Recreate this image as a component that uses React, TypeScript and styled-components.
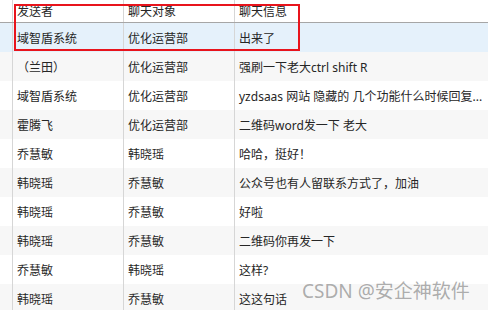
import * as React from 'react';
import styled, { createGlobalStyle } from 'styled-components';

const GlobalStyle = createGlobalStyle`
  html, body {
    margin: 0;
    padding: 0;
    background: #fff;
    overflow: hidden;
  }
  body {
    font-family: "Noto Sans", "Noto Sans CJK SC", sans-serif;
  }
`;

type Msg = { from: string; to: string; text: string };

const messages: Msg[] = [
  { from: '域智盾系统', to: '优化运营部', text: '出来了' },
  { from: '（兰田）', to: '优化运营部', text: '强刷一下老大ctrl shift R' },
  { from: '域智盾系统', to: '优化运营部', text: 'yzdsaas 网站 隐藏的 几个功能什么时候回复...' },
  { from: '霍腾飞', to: '优化运营部', text: '二维码word发一下 老大' },
  { from: '乔慧敏', to: '韩晓瑶', text: '哈哈，挺好！' },
  { from: '韩晓瑶', to: '乔慧敏', text: '公众号也有人留联系方式了，加油' },
  { from: '韩晓瑶', to: '乔慧敏', text: '好啦' },
  { from: '韩晓瑶', to: '乔慧敏', text: '二维码你再发一下' },
  { from: '乔慧敏', to: '韩晓瑶', text: '这样?' },
  { from: '韩晓瑶', to: '乔慧敏', text: '这这句话' },
];

export default function App() {
  return (
    <>
      <GlobalStyle />
      <Grid>
        <HeadRow>
          <Cell />
          <Cell $line>发送者</Cell>
          <Cell $line>聊天对象</Cell>
          <Cell $line>聊天信息</Cell>
        </HeadRow>
        {messages.map((m, i) => (
          <Row key={i} $tone={i === 0 ? 'selected' : i % 2 === 1 ? 'alt' : 'plain'}>
            <Cell />
            <Cell $line>{m.from}</Cell>
            <Cell $line>{m.to}</Cell>
            <Cell $line>{m.text}</Cell>
          </Row>
        ))}
        <Highlight />
        <Watermark>CSDN @安企神软件</Watermark>
      </Grid>
    </>
  );
}

const Grid = styled.div`
  position: relative;
  width: 488px;
  height: 310px;
  overflow: hidden;
  font-family: "Noto Sans", "Noto Sans CJK SC", sans-serif;
  font-size: 12px;
  color: #262626;
`;

const HeadRow = styled.div`
  display: grid;
  grid-template-columns: 12px 111px 111px 1fr;
  height: 22px;
  border-bottom: 1px solid #a6a6a6;
  background: #fff;
`;

const tones = {
  selected: '#e5f1fb',
  alt: '#f7f7f7',
  plain: '#fff',
};

const Row = styled.div<{ $tone: keyof typeof tones }>`
  display: grid;
  grid-template-columns: 12px 111px 111px 1fr;
  height: 29px;
  background: ${(p) => tones[p.$tone]};
`;

const Cell = styled.div<{ $line?: boolean }>`
  display: flex;
  align-items: center;
  padding-left: ${(p) => (p.$line ? '4px' : '0')};
  border-left: ${(p) => (p.$line ? '1px solid #d6d6d6' : 'none')};
  white-space: nowrap;
  overflow: hidden;
  min-width: 0;
`;

const Highlight = styled.div`
  position: absolute;
  left: 14px;
  top: 4px;
  width: 282px;
  height: 43px;
  border: 2px solid #e8141c;
`;

const Watermark = styled.div`
  position: absolute;
  left: 302px;
  top: 276px;
  font-family: "Noto Sans", "Noto Sans CJK SC", sans-serif;
  font-size: 19px;
  color: rgba(130, 130, 130, 0.65);
  white-space: nowrap;
`;
